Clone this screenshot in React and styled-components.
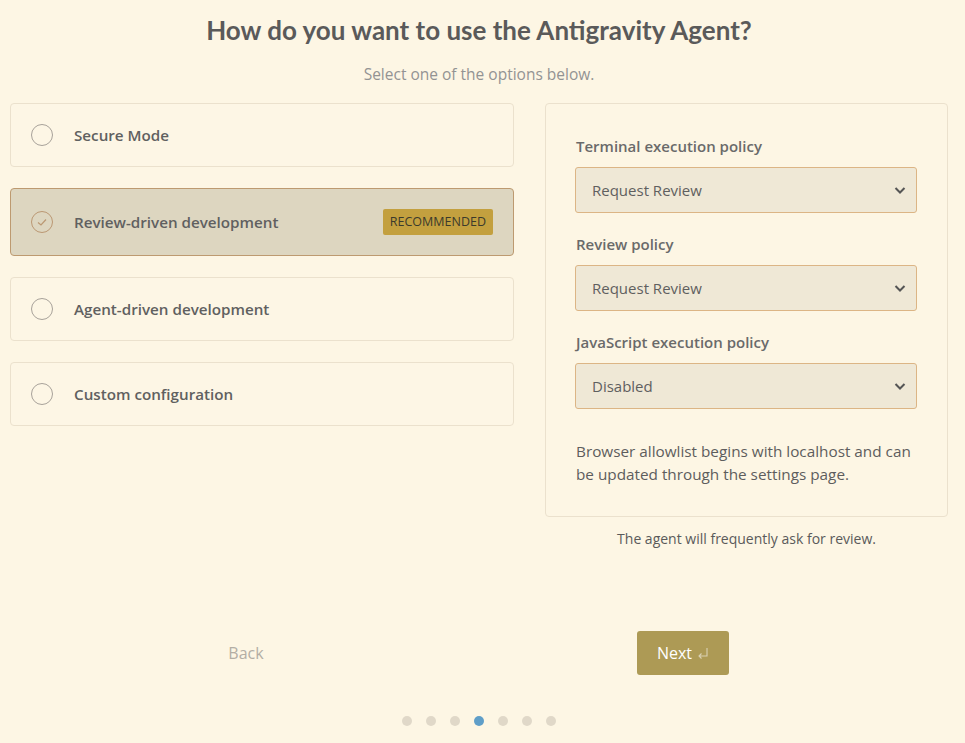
import React, { useState } from "react";
import styled, { createGlobalStyle } from "styled-components";

const GlobalStyle = createGlobalStyle`
    html, body {
        margin: 0;
        padding: 0;
        background: #fdf6e4;
    }
    body {
        font-family: "Open Sans", "Noto Sans", sans-serif;
        color: #5b5b5b;
    }
`;

const Page = styled.div`
    width: 938px;
    margin-left: 10px;
    padding-top: 14px;
    display: flex;
    flex-direction: column;
    align-items: center;
`;

const Title = styled.h1`
    margin: 0;
    font-family: "Lato", sans-serif;
    font-weight: 700;
    font-size: 26px;
    line-height: 32px;
    color: #5a5a5a;
`;

const Subtitle = styled.p`
    margin: 18px 0 0;
    font-size: 15.5px;
    line-height: 20px;
    color: #939393;
`;

const Columns = styled.div`
    width: 100%;
    margin-top: 19px;
    display: grid;
    grid-template-columns: 504px 403px;
    column-gap: 31px;
    align-items: start;
`;

const OptionList = styled.div`
    display: flex;
    flex-direction: column;
    gap: 21px;
`;

const Option = styled.div`
    display: flex;
    align-items: center;
    height: ${(p) => (p.$selected ? "66px" : "62px")};
    padding: 0 20px;
    border-radius: 4px;
    border: 1px solid ${(p) => (p.$selected ? "#bd9a70" : "#ebe1cd")};
    background: ${(p) => (p.$selected ? "#ddd6c0" : "#fdf6e5")};
    cursor: pointer;
`;

const Radio = styled.span`
    width: 22px;
    height: 22px;
    flex: 0 0 22px;
    box-sizing: border-box;
    border-radius: 50%;
    border: 1px solid ${(p) => (p.$selected ? "#bb9873" : "#a8a29a")};
    display: flex;
    align-items: center;
    justify-content: center;
`;

const OptionLabel = styled.span`
    margin-left: 21px;
    font-size: 15.2px;
    font-weight: 600;
    color: #606060;
    flex: 1;
`;

const Badge = styled.span`
    background: #c3a03f;
    color: #3b3a2c;
    font-size: 12.5px;
    font-weight: 500;
    padding: 0 7px;
    height: 26px;
    line-height: 26px;
    border-radius: 2px;
`;

const Panel = styled.div`
    box-sizing: border-box;
    border: 1px solid #ebe1cd;
    border-radius: 4px;
    padding: 31px 30px 30px;
    display: flex;
    flex-direction: column;
`;

const Field = styled.div`
    display: flex;
    flex-direction: column;
    margin-bottom: 20px;
`;

const FieldLabel = styled.label`
    font-size: 15px;
    font-weight: 600;
    color: #6a6a6a;
    line-height: 22px;
    margin-bottom: 10px;
`;

const SelectBox = styled.div`
    box-sizing: border-box;
    height: 46px;
    width: 342px;
    margin-left: -1px;
    border: 1px solid #dcb585;
    border-radius: 3px;
    background: #efe8d6;
    display: flex;
    align-items: center;
    justify-content: space-between;
    padding: 0 9px 0 16px;
    font-size: 15px;
    color: #5f5f5f;
`;

const Note = styled.p`
    margin: 11px 0 0;
    font-size: 15.3px;
    line-height: 23px;
    color: #5d5d5d;
`;

const Caption = styled.p`
    margin: 12px 0 0;
    text-align: center;
    font-size: 14px;
    line-height: 20px;
    color: #5a5a5a;
`;

const Footer = styled.div`
    width: 874px;
    margin: 82px 29px 0 0;
    display: grid;
    grid-template-columns: 1fr 1fr;
    align-items: center;
    justify-items: center;
`;

const BackButton = styled.button`
    border: none;
    background: none;
    font-family: inherit;
    font-size: 16px;
    color: #b3aea4;
    cursor: pointer;
    padding: 0;
`;

const NextButton = styled.button`
    border: none;
    border-radius: 3px;
    background: #ad9a55;
    color: #ffffff;
    font-family: inherit;
    font-size: 16px;
    height: 44px;
    width: 92px;
    display: flex;
    align-items: center;
    justify-content: center;
    gap: 5px;
    cursor: pointer;
`;

const Dots = styled.div`
    margin-top: 41px;
    display: flex;
    gap: 14px;
`;

const Dot = styled.span`
    width: 10px;
    height: 10px;
    border-radius: 50%;
    background: ${(p) => (p.$active ? "#5f9ec8" : "#e0d8c8")};
`;

const Check = () => (
    <svg width="12" height="10" viewBox="0 0 12 10">
        <path d="M2 5.5 L5 8 L10 2.5" fill="none" stroke="#bb9873" strokeWidth="1.2" />
    </svg>
);

const Chevron = () => (
    <svg width="14" height="14" viewBox="0 0 14 14">
        <path d="M2.5 5 L7 9.5 L11.5 5" fill="none" stroke="#555" strokeWidth="2" />
    </svg>
);

const EnterIcon = () => (
    <svg width="12" height="13" viewBox="0 0 12 13">
        <path d="M10 1 V9 H2 M4.5 6.5 L2 9 L4.5 11.5" fill="none" stroke="rgba(255,255,255,0.55)" strokeWidth="1.1" />
    </svg>
);

const options = [
    { id: "secure", label: "Secure Mode" },
    { id: "review", label: "Review-driven development", badge: "RECOMMENDED" },
    { id: "agent", label: "Agent-driven development" },
    { id: "custom", label: "Custom configuration" },
];

const fields = [
    { label: "Terminal execution policy", value: "Request Review" },
    { label: "Review policy", value: "Request Review" },
    { label: "JavaScript execution policy", value: "Disabled" },
];

const App = () => {
    const [selected, setSelected] = useState("review");
    return (
        <>
            <GlobalStyle />
            <Page>
                <Title>How do you want to use the Antigravity Agent?</Title>
                <Subtitle>Select one of the options below.</Subtitle>
                <Columns>
                    <OptionList>
                        {options.map((o) => (
                            <Option key={o.id} $selected={selected === o.id} onClick={() => setSelected(o.id)}>
                                <Radio $selected={selected === o.id}>{selected === o.id && <Check />}</Radio>
                                <OptionLabel>{o.label}</OptionLabel>
                                {o.badge && <Badge>{o.badge}</Badge>}
                            </Option>
                        ))}
                    </OptionList>
                    <div>
                        <Panel>
                            {fields.map((f) => (
                                <Field key={f.label}>
                                    <FieldLabel>{f.label}</FieldLabel>
                                    <SelectBox>
                                        <span>{f.value}</span>
                                        <Chevron />
                                    </SelectBox>
                                </Field>
                            ))}
                            <Note>Browser allowlist begins with localhost and can be updated through the settings page.</Note>
                        </Panel>
                        <Caption>The agent will frequently ask for review.</Caption>
                    </div>
                </Columns>
                <Footer>
                    <BackButton>Back</BackButton>
                    <NextButton>
                        Next <EnterIcon />
                    </NextButton>
                </Footer>
                <Dots>
                    {[0, 1, 2, 3, 4, 5, 6].map((i) => (
                        <Dot key={i} $active={i === 3} />
                    ))}
                </Dots>
            </Page>
        </>
    );
};

export default App;
